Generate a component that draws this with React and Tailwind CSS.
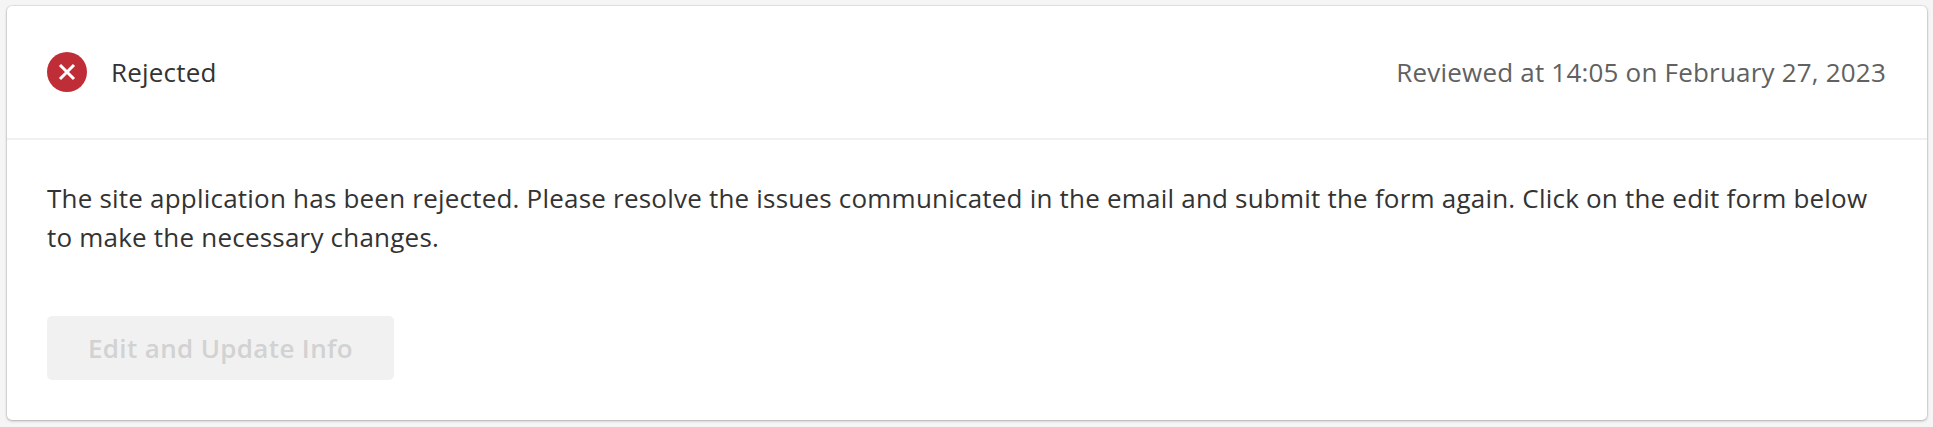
const App = () => {
  return (
    <div className="h-[427px] bg-[#f5f5f5] pt-[6px] pr-[6px] pb-[7px] pl-[7px]" style={{ fontFamily: '"Open Sans", sans-serif' }}>
      <div className="h-full bg-white rounded-[5px] shadow-[0_0_0_1px_rgba(0,0,0,0.06),0_1px_3px_rgba(0,0,0,0.25)] flex flex-col">
        <header className="flex items-center justify-between h-[134px] pl-[40px] pr-[41px] border-b-2 border-[#f0f0f0]">
          <div className="flex items-center gap-[24px]">
            <span className="w-[40px] h-[40px] rounded-full bg-[#bf2e37] flex items-center justify-center">
              <svg width="20" height="20" viewBox="0 0 20 20" fill="none" stroke="white" strokeWidth="3">
                <path d="M3 3 L17 17 M17 3 L3 17" />
              </svg>
            </span>
            <span className="text-[26px] tracking-[0.2px] text-[#333333]">Rejected</span>
          </div>
          <span className="text-[26px] tracking-[0.2px] text-[#616161]">Reviewed at 14:05 on February 27, 2023</span>
        </header>
        <main className="flex-1 pl-[40px] pr-[41px] pt-[39px]">
          <p className="text-[26px] tracking-[0.21px] leading-[39px] text-[#333333]">
            The site application has been rejected. Please resolve the issues communicated in the email and submit the form again. Click on the edit form below to make the necessary changes.
          </p>
          <button className="block mt-[59px] w-[347px] h-[64px] rounded-[5px] bg-[#f1f1f1] text-[26px] tracking-[0.35px] font-semibold text-[#d2d2d2]">
            Edit and Update Info
          </button>
        </main>
      </div>
    </div>
  );
};

export default App;
